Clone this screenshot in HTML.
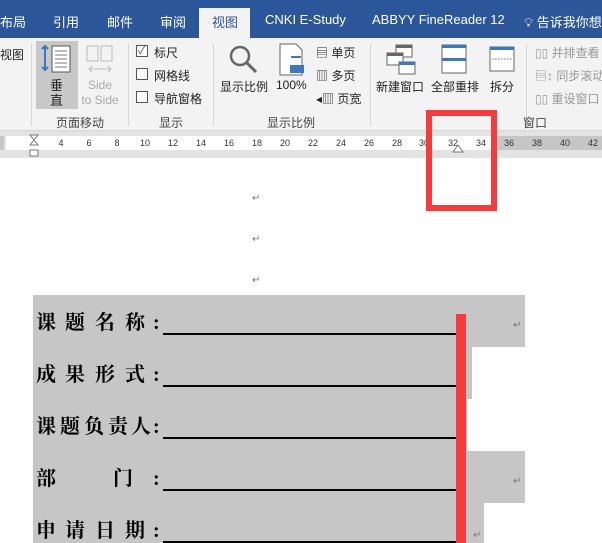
<!DOCTYPE html>
<html><head><meta charset="utf-8"><style>
*{margin:0;padding:0;box-sizing:border-box}
body{width:602px;height:543px;overflow:hidden;position:relative;background:#fff;font-family:"Liberation Sans","Noto Sans CJK SC",sans-serif;font-size:12px;color:#222}
.a{position:absolute;white-space:nowrap}
.tabs{position:absolute;left:0;top:0;width:602px;height:38px;background:#2b579a}
.tab{position:absolute;top:12px;color:#fff;font-size:13px}
.rib{position:absolute;left:0;top:38px;width:602px;height:93px;background:#f3f3f3;border-bottom:1px solid #d5d5d5}
.sep{position:absolute;top:44px;width:1px;height:82px;background:#d6d6d6}
.gl{position:absolute;top:114px;font-size:12px;color:#444}
.cb{position:absolute;width:12px;height:12px;border:1px solid #555;background:#fff}
.ruler{position:absolute;left:0;top:131px;width:602px;height:27px;background:#e3e3e3}
.num{position:absolute;top:138px;font-size:9px;color:#333;transform:translateX(-50%)}
.row{position:absolute;background:#c6c6c6;height:52px}
.c{position:absolute;font-family:"Liberation Serif","Noto Serif CJK SC",serif;font-weight:bold;font-size:20px;line-height:20px;color:#000}
.ul{position:absolute;left:163px;width:293px;height:2px;background:#000}
.ret{position:absolute;color:#777;font-size:10px}
</style></head><body>
<div class="tabs"></div>
<div class="tab" style="left:0">布局</div>
<div class="tab" style="left:53px">引用</div>
<div class="tab" style="left:107px">邮件</div>
<div class="tab" style="left:160px">审阅</div>
<div class="a" style="left:199px;top:8px;width:51px;height:30px;background:#f3f3f3"></div>
<div class="tab" style="left:212px;color:#2b579a">视图</div>
<div class="tab" style="left:265px">CNKI E-Study</div>
<div class="tab" style="left:372px">ABBYY FineReader 12</div>
<div class="tab" style="left:524px">💡︎ 告诉我你想</div>
<div class="rib"></div>
<div class="a" style="left:0;top:46px;font-size:12px">视图</div>
<div class="sep" style="left:31px"></div>
<div class="a" style="left:36px;top:41px;width:42px;height:68px;background:#c8c8c8"></div>
<svg class="a" style="left:40px;top:44px" width="34" height="30"><path d="M5 2v24M2 5l3-3 3 3M2 23l3 3 3-3" stroke="#3b78c2" stroke-width="2" fill="none"/><rect x="12" y="2" width="18" height="26" fill="#fff" stroke="#555"/><path d="M15 7h12M15 11h12M15 15h12M15 19h12M15 23h12" stroke="#777"/></svg>
<div class="a" style="left:50px;top:78px;font-size:13px;line-height:15px">垂<br>直</div>
<svg class="a" style="left:86px;top:45px" width="28" height="30"><rect x="1" y="1" width="11" height="15" fill="none" stroke="#bbb"/><rect x="15" y="1" width="11" height="15" fill="none" stroke="#bbb"/><path d="M3 24h22M3 24l3-3M3 24l3 3M25 24l-3-3M25 24l-3 3" stroke="#bbb" fill="none"/></svg>
<div class="a" style="left:80px;top:78px;font-size:12px;color:#aaa;line-height:15px;text-align:center;width:40px">Side<br>to Side</div>
<div class="gl" style="left:56px">页面移动</div>
<div class="sep" style="left:128px"></div>
<div class="cb" style="left:136px;top:45px"></div><div class="a" style="left:138px;top:42px;color:#555;font-size:11px">✓</div>
<div class="a" style="left:154px;top:44px">标尺</div>
<div class="cb" style="left:136px;top:68px"></div><div class="a" style="left:154px;top:67px">网格线</div>
<div class="cb" style="left:136px;top:91px"></div><div class="a" style="left:154px;top:90px">导航窗格</div>
<div class="gl" style="left:159px">显示</div>
<div class="sep" style="left:213px"></div>
<svg class="a" style="left:228px;top:44px" width="32" height="32"><circle cx="12" cy="12" r="9" fill="none" stroke="#666" stroke-width="2.5"/><path d="M19 19l9 9" stroke="#666" stroke-width="3"/></svg>
<div class="a" style="left:220px;top:78px">显示比例</div>
<svg class="a" style="left:278px;top:43px" width="26" height="34"><path d="M2 1h16l6 6v25H2z" fill="#fff" stroke="#666"/><rect x="12" y="22" width="14" height="8" fill="#3b78c2"/><path d="M13 14h10" stroke="#3b78c2" stroke-width="2"/></svg>
<div class="a" style="left:276px;top:78px">100%</div>
<div class="a" style="left:316px;top:44px">▤ 单页</div>
<div class="a" style="left:316px;top:67px">▥ 多页</div>
<div class="a" style="left:316px;top:90px">◂▥ 页宽</div>
<div class="gl" style="left:267px">显示比例</div>
<div class="sep" style="left:370px"></div>
<svg class="a" style="left:386px;top:44px" width="30" height="32"><rect x="10" y="1" width="16" height="12" fill="#fff" stroke="#666"/><rect x="10" y="1" width="16" height="3" fill="#666"/><rect x="1" y="9" width="16" height="12" fill="#fff" stroke="#666"/><rect x="1" y="9" width="16" height="3" fill="#666"/><rect x="13" y="18" width="16" height="12" fill="#fff" stroke="#666"/><rect x="13" y="18" width="16" height="3" fill="#3b78c2"/></svg>
<div class="a" style="left:376px;top:78px">新建窗口</div>
<svg class="a" style="left:441px;top:44px" width="26" height="30"><rect x="1" y="1" width="24" height="28" fill="#fff" stroke="#666"/><rect x="1" y="1" width="24" height="3" fill="#3b78c2"/><rect x="1" y="14" width="24" height="3" fill="#3b78c2"/></svg>
<div class="a" style="left:431px;top:78px">全部重排</div>
<svg class="a" style="left:489px;top:46px" width="26" height="26"><rect x="1" y="1" width="24" height="24" fill="#fff" stroke="#666"/><rect x="1" y="1" width="24" height="3" fill="#3b78c2"/><path d="M3 13h20" stroke="#3b78c2" stroke-dasharray="1.5 1.5"/></svg>
<div class="a" style="left:490px;top:78px">拆分</div>
<div class="sep" style="left:526px"></div>
<div class="a" style="left:535px;top:44px;color:#999">▯▯ 并排查看</div>
<div class="a" style="left:535px;top:67px;color:#999">▤↕ 同步滚动</div>
<div class="a" style="left:535px;top:90px;color:#999">▯▯ 重设窗口</div>
<div class="gl" style="left:523px">窗口</div>
<div class="ruler"></div>
<div class="a" style="left:0;top:136px;width:4px;height:14px;background:#c8c8c8"></div>
<div class="a" style="left:6px;top:136px;width:491px;height:14px;background:#fff"></div>
<div class="a" style="left:497px;top:136px;width:105px;height:14px;background:#c6c6c6"></div>
<svg class="a" style="left:28px;top:134px" width="12" height="24"><path d="M2 1h8L6 6zM2 11h8L6 6z" fill="#fff" stroke="#777"/><rect x="2" y="16" width="8" height="6" fill="#fff" stroke="#777"/></svg>
<div class="num" style="left:61px">4</div><div class="num" style="left:89px">6</div><div class="num" style="left:117px">8</div><div class="num" style="left:145px">10</div><div class="num" style="left:173px">12</div><div class="num" style="left:201px">14</div><div class="num" style="left:229px">16</div><div class="num" style="left:257px">18</div><div class="num" style="left:285px">20</div><div class="num" style="left:313px">22</div><div class="num" style="left:341px">24</div><div class="num" style="left:369px">26</div><div class="num" style="left:397px">28</div><div class="num" style="left:424px">30</div><div class="num" style="left:453px">32</div><div class="num" style="left:481px">34</div><div class="num" style="left:509px">36</div><div class="num" style="left:537px">38</div><div class="num" style="left:565px">40</div><div class="num" style="left:593px">42</div>
<svg class="a" style="left:452px;top:143px" width="12" height="10"><path d="M1 9h10L6 2z" fill="#fff" stroke="#777"/></svg>
<div class="ret" style="left:252px;top:193px">↵</div>
<div class="ret" style="left:252px;top:234px">↵</div>
<div class="ret" style="left:252px;top:275px">↵</div>
<div class="row" style="left:33px;top:295px;width:492px"></div>
<div class="row" style="left:33px;top:347px;width:439px"></div>
<div class="row" style="left:33px;top:399px;width:434px"></div>
<div class="row" style="left:33px;top:451px;width:492px"></div>
<div class="row" style="left:33px;top:503px;width:451px;height:40px"></div>

<div class="c" style="top:313px;left:36px">课</div><div class="c" style="top:313px;left:65px">题</div><div class="c" style="top:313px;left:95px">名</div><div class="c" style="top:313px;left:125px">称</div><div class="c" style="top:313px;left:153px">:</div>
<div class="ul" style="top:333px"></div>
<div class="c" style="top:365px;left:36px">成</div><div class="c" style="top:365px;left:65px">果</div><div class="c" style="top:365px;left:95px">形</div><div class="c" style="top:365px;left:125px">式</div><div class="c" style="top:365px;left:153px">:</div>
<div class="ul" style="top:385px"></div>
<div class="c" style="top:417px;left:36px">课</div><div class="c" style="top:417px;left:60px">题</div><div class="c" style="top:417px;left:84px">负</div><div class="c" style="top:417px;left:108px">责</div><div class="c" style="top:417px;left:131px">人</div><div class="c" style="top:417px;left:153px">:</div>
<div class="ul" style="top:437px"></div>
<div class="c" style="top:469px;left:36px">部</div><div class="c" style="top:469px;left:113px">门</div><div class="c" style="top:469px;left:153px">:</div>
<div class="ul" style="top:489px"></div>
<div class="c" style="top:521px;left:36px">申</div><div class="c" style="top:521px;left:65px">请</div><div class="c" style="top:521px;left:95px">日</div><div class="c" style="top:521px;left:125px">期</div><div class="c" style="top:521px;left:153px">:</div>
<div class="ul" style="top:541px"></div>
<div class="ret" style="left:513px;top:320px">↵</div>
<div class="ret" style="left:513px;top:476px">↵</div>
<div class="ret" style="left:473px;top:530px">↵</div>
<div class="a" style="left:456px;top:314px;width:10px;height:229px;background:#f83a3a"></div>
<div class="a" style="left:426px;top:110px;width:71px;height:101px;border:6px solid #f83a3a"></div>
</body></html>
